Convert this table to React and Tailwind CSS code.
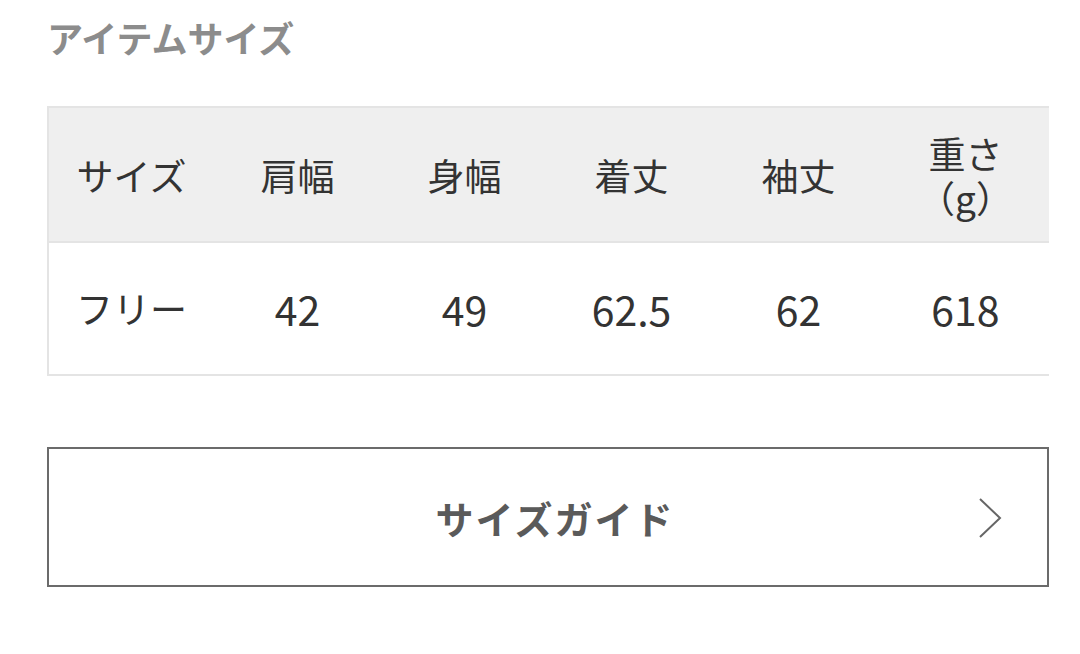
import React from "react";

const headers = [["サイズ"], ["肩幅"], ["身幅"], ["着丈"], ["袖丈"], ["重さ", "（g）"]];
const values = ["フリー", "42", "49", "62.5", "62", "618"];

export default function App() {
  return (
    <div
      className="w-[1080px] h-[654px] bg-white overflow-hidden"
      style={{ fontFamily: '"Noto Sans CJK JP", "Noto Sans", sans-serif' }}
    >
      <div className="pl-[47px] pt-[13px] text-[36px] leading-[48px] font-bold text-[#8c8c8c]">
        アイテムサイズ
      </div>
      <div className="ml-[47px] mt-[45px] w-[1002px] overflow-hidden">
        <table className="border-separate border-spacing-0 w-[1002px] table-fixed">
          <tbody>
            <tr className="bg-[#efefef]">
              {headers.map((h, i) => (
                <td
                  key={i}
                  className={`h-[135px] w-[167px] text-center align-middle text-[37px] leading-[44px] text-[#333] border-t-2 border-[#e4e4e4] ${i === 0 ? "border-l-2" : ""}`}
                >
                  {h.map((l, j) => (
                    <div key={j}>{l}</div>
                  ))}
                </td>
              ))}
            </tr>
            <tr className="bg-white">
              {values.map((v, i) => (
                <td
                  key={i}
                  className={`h-[135px] text-center align-middle text-[#333] border-t-2 border-b-2 border-[#e4e4e4] ${i === 0 ? "border-l-2 text-[37px]" : "text-[41px]"}`}
                >
                  {v}
                </td>
              ))}
            </tr>
          </tbody>
        </table>
      </div>
      <div className="ml-[47px] mt-[71px] w-[1002px] h-[140px] border-2 border-[#6b6b6b] flex items-center relative">
        <div className="flex-1 text-center pl-[14px] text-[38px] tracking-[2px] font-bold text-[#5a5a5a]">
          サイズガイド
        </div>
        <svg
          className="absolute right-[45px] top-[49px]"
          width="24"
          height="40"
          viewBox="0 0 24 40"
          fill="none"
          stroke="#666"
          strokeWidth="2"
        >
          <path d="M2 1 L22 20 L2 39" />
        </svg>
      </div>
    </div>
  );
}
